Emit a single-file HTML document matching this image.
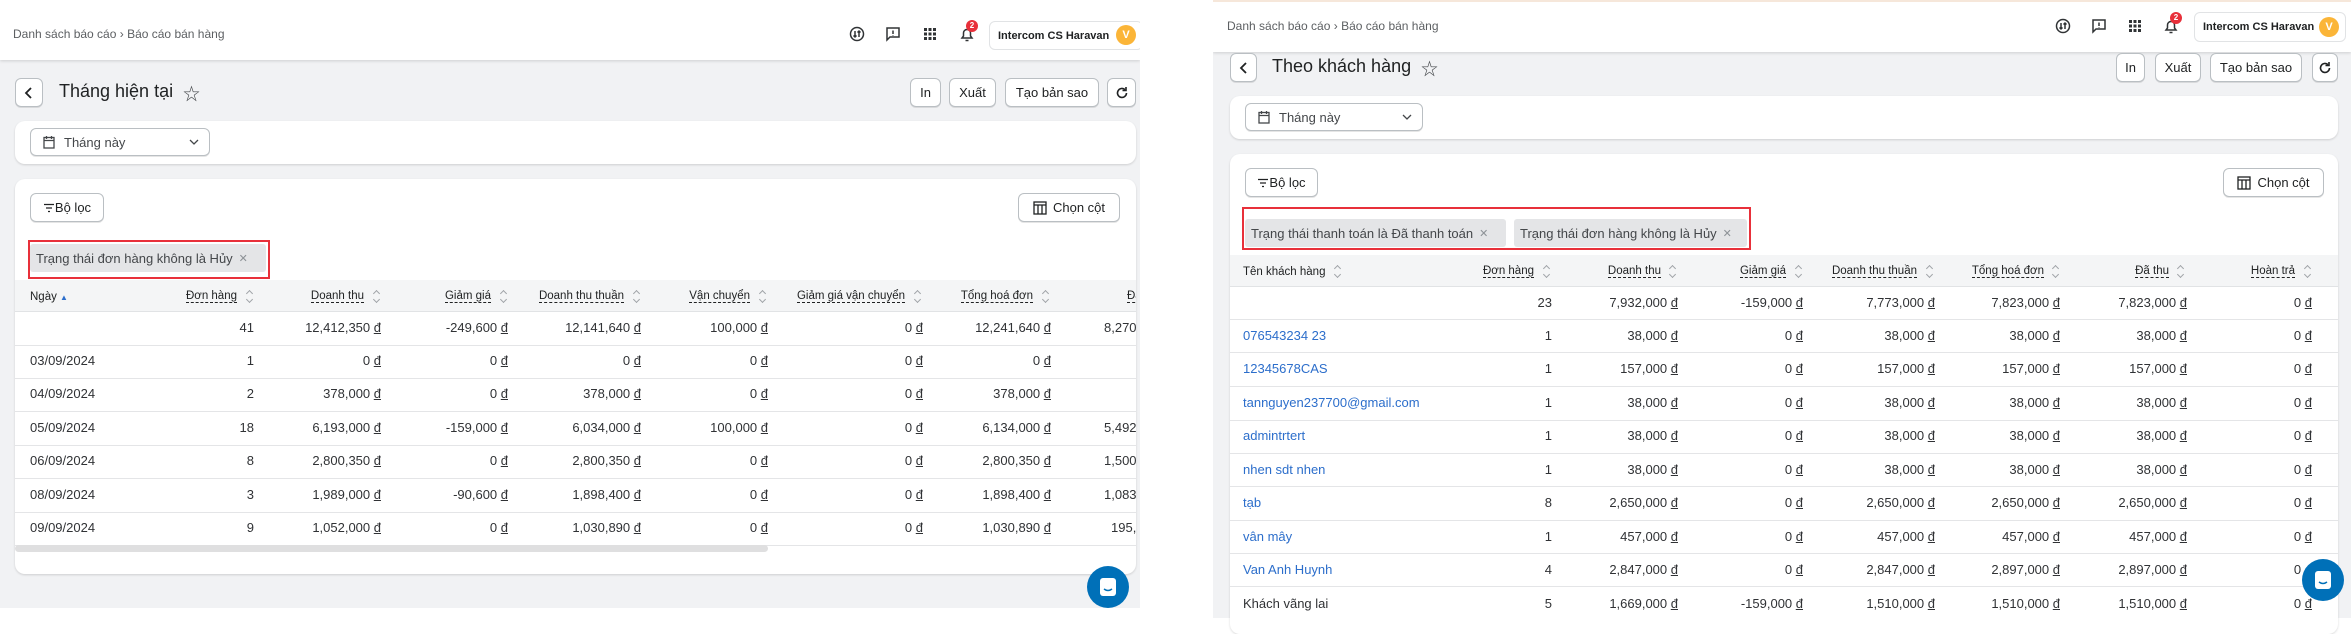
<!DOCTYPE html>
<html><head><meta charset="utf-8"><style>
*{box-sizing:border-box;margin:0;padding:0}
body{width:2351px;height:618px;position:relative;background:#fff;font-family:"Liberation Sans","Noto Sans CJK SC",sans-serif;color:#202223;overflow:hidden}
.a{position:absolute}
.panel{position:absolute;background:#f1f2f4;overflow:hidden}
.top{position:absolute;left:0;top:0;background:#fff;box-shadow:0 1px 3px rgba(0,0,0,.15)}
.bc{position:absolute;font-size:12px;color:#5c5f62;white-space:nowrap}
.btn{position:absolute;background:#fff;border:1px solid #babfc3;border-radius:6px;box-shadow:0 1px 0 rgba(0,0,0,.1);font-size:13px;display:flex;align-items:center;justify-content:center;color:#202223;white-space:nowrap}
.card{position:absolute;background:#fff;border-radius:10px;box-shadow:0 1px 2px rgba(0,0,0,.15);overflow:hidden}
.title{position:absolute;font-size:18px;font-weight:500;white-space:nowrap}
.c{position:absolute;width:170px;text-align:right;font-size:13px;white-space:nowrap;line-height:18px;color:#303235}
.l{position:absolute;font-size:13px;white-space:nowrap;line-height:18px;color:#303235}
u{text-decoration:underline}
.blue{color:#2c6ecb}
.h{position:absolute;width:200px;text-align:right;font-size:11.5px;white-space:nowrap;line-height:16px}
.h span{border-bottom:1px dashed #202223}
.s{position:absolute;width:7px;height:14px}
.s::before,.s::after{content:'';position:absolute;left:1px;width:4px;height:4px;border-left:1px solid #a0a4a8;border-top:1px solid #a0a4a8}
.s::before{top:2px;transform:rotate(45deg)}
.s::after{top:8px;transform:rotate(225deg)}
.sep{position:absolute;left:0;right:0;height:1px;background:#e4e5e7}
.hb{position:absolute;left:0;right:0;height:32px;background:#f4f5f6;border-bottom:1px solid #e1e3e5}
.tag{position:absolute;background:#e4e5e7;border-radius:3px;font-size:13px;color:#44474a;display:flex;align-items:center;padding-left:6px;white-space:nowrap}
.tag i{font-style:normal;color:#8c9196;margin-left:6px;font-size:11px}
.red{position:absolute;border:2px solid #e8303a}
.user{position:absolute;background:#fff;border:1px solid #e1e3e5;border-radius:6px;font-size:11px;font-weight:600;display:flex;align-items:center;padding-left:8px;white-space:nowrap}
.av{position:absolute;width:20px;height:20px;border-radius:50%;background:#fbb538;color:#fff;font-size:11px;font-weight:bold;text-align:center;line-height:20px}
.chat{position:absolute;width:42px;height:42px;border-radius:50%;background:#0070b8}
</style></head><body>

<!-- LEFT PANEL -->
<div class="panel" style="left:0;top:0;width:1140px;height:608px">
  <div class="top" style="width:1140px;height:60px"></div>
  <div class="bc" style="left:13px;top:27px">Danh sách báo cáo › Báo cáo bán hàng</div>
  <svg class="a" style="left:849px;top:26px" width="16" height="16" viewBox="0 0 16 16" fill="none" stroke="#303335" stroke-width="1.5"><circle cx="8" cy="8" r="6.5"/><path d="M6 5v6M4.5 9.5L6 11l1.5-1.5M10 11V5M8.5 6.5L10 5l1.5 1.5"/></svg>
  <svg class="a" style="left:885px;top:26px" width="16" height="16" viewBox="0 0 16 16" fill="none" stroke="#303335" stroke-width="1.5"><path d="M2 2h12v9H5l-3 3z"/><path d="M8 4.5v3.5M8 9.5v.5"/></svg>
  <svg class="a" style="left:923px;top:27px" width="14" height="14" viewBox="0 0 14 14" fill="#303335"><rect x="1" y="1" width="3" height="3"/><rect x="5.5" y="1" width="3" height="3"/><rect x="10" y="1" width="3" height="3"/><rect x="1" y="5.5" width="3" height="3"/><rect x="5.5" y="5.5" width="3" height="3"/><rect x="10" y="5.5" width="3" height="3"/><rect x="1" y="10" width="3" height="3"/><rect x="5.5" y="10" width="3" height="3"/><rect x="10" y="10" width="3" height="3"/></svg>
  <svg class="a" style="left:959px;top:26px" width="16" height="17" viewBox="0 0 16 17" fill="none" stroke="#303335" stroke-width="1.5"><path d="M3 12h10l-1.5-2V7a3.5 3.5 0 0 0-7 0v3z"/><path d="M6.5 14.5h3"/></svg>
  <div class="a" style="left:966px;top:20px;width:12px;height:12px;border-radius:50%;background:#e8303a;color:#fff;font-size:8px;font-weight:bold;text-align:center;line-height:12px">2</div>
  <div class="user" style="left:989px;top:21px;width:154px;height:29px">Intercom CS Haravan</div>
  <div class="av" style="left:1116px;top:25px">V</div>

  <div class="btn" style="left:15px;top:78px;width:28px;height:29px"><svg width="10" height="14" viewBox="0 0 10 14" fill="none" stroke="#202223" stroke-width="1.8"><path d="M7 2L2 7l5 5"/></svg></div>
  <div class="title" style="left:59px;top:81px">Tháng hiện tại</div>
  <div class="a" style="left:183px;top:80px;font-size:17px;color:#44474a">☆</div>
  <div class="btn" style="left:910px;top:78px;width:31px;height:29px">In</div>
  <div class="btn" style="left:949px;top:78px;width:47px;height:29px">Xuất</div>
  <div class="btn" style="left:1005px;top:78px;width:94px;height:29px">Tạo bản sao</div>
  <div class="btn" style="left:1107px;top:78px;width:29px;height:29px"><svg width="14" height="14" viewBox="0 0 14 14" fill="none" stroke="#202223" stroke-width="1.6"><path d="M11.5 7A4.5 4.5 0 1 1 10 3.6"/><path d="M11 1v3.5H7.5"/></svg></div>

  <div class="card" style="left:15px;top:121px;width:1121px;height:43px">
    <div class="btn" style="left:15px;top:7px;width:180px;height:28px;justify-content:flex-start;padding-left:12px;color:#44474a"><svg width="12" height="14" viewBox="0 0 12 14" fill="none" stroke="#44474a" stroke-width="1.3"><rect x="1" y="2.5" width="10" height="10.5"/><path d="M1 5.5h10M3.5 1v3M8.5 1v3"/></svg><span style="margin-left:9px">Tháng này</span><svg style="position:absolute;right:10px" width="10" height="6" viewBox="0 0 10 6" fill="none" stroke="#44474a" stroke-width="1.3"><path d="M1 1l4 4 4-4"/></svg></div>
  </div>

  <div class="card" style="left:15px;top:179px;width:1121px;height:395px">
    <div class="btn" style="left:15px;top:14px;width:74px;height:29px"><svg width="12" height="10" viewBox="0 0 12 10" stroke="#202223" stroke-width="1.3"><path d="M1 1.5h10M3 5h6M5 8.5h2"/></svg>Bộ lọc</div>
    <div class="btn" style="left:1003px;top:14px;width:102px;height:29px"><svg width="14" height="14" viewBox="0 0 14 14" fill="none" stroke="#202223" stroke-width="1.3"><rect x="1" y="1" width="12" height="12"/><path d="M1 4h12M5 4v9M9 4v9"/></svg><span style="margin-left:6px">Chọn cột</span></div>
    <div class="red" style="left:13px;top:61px;width:242px;height:39px"></div>
    <div class="tag" style="left:15px;top:65px;width:236px;height:28px">Trạng thái đơn hàng không là Hủy<i>✕</i></div>
    <div class="hb" style="top:101px"></div>
    <div class="l" style="left:15px;top:109px;font-size:11.5px;color:#202223">Ngày <span style="color:#2c6ecb;font-size:8px">▲</span></div>
    <div class="h" style="left:22px;top:109px"><span>Đơn hàng</span></div><div class="s" style="left:231px;top:110px"></div>
    <div class="h" style="left:149px;top:109px"><span>Doanh thu</span></div><div class="s" style="left:358px;top:110px"></div>
    <div class="h" style="left:276px;top:109px"><span>Giảm giá</span></div><div class="s" style="left:485px;top:110px"></div>
    <div class="h" style="left:409px;top:109px"><span>Doanh thu thuần</span></div><div class="s" style="left:618px;top:110px"></div>
    <div class="h" style="left:535px;top:109px"><span>Vận chuyển</span></div><div class="s" style="left:744px;top:110px"></div>
    <div class="h" style="left:690px;top:109px"><span>Giảm giá vận chuyển</span></div><div class="s" style="left:899px;top:110px"></div>
    <div class="h" style="left:818px;top:109px"><span>Tổng hoá đơn</span></div><div class="s" style="left:1027px;top:110px"></div>
    <div class="h" style="left:1112px;top:109px;width:120px;text-align:left"><span>Đã thu</span></div>

    <div class="sep" style="top:166px"></div><div class="sep" style="top:199px"></div><div class="sep" style="top:232px"></div><div class="sep" style="top:266px"></div><div class="sep" style="top:299px"></div><div class="sep" style="top:333px"></div><div class="sep" style="top:366px"></div>
    <div class="a" style="left:0;top:366px;width:753px;height:7px;background:#dfdfe0;border-radius:4px"></div>

    <div class="c" style="left:69px;top:140px">41</div><div class="c" style="left:196px;top:140px">12,412,350 <u>đ</u></div><div class="c" style="left:323px;top:140px">-249,600 <u>đ</u></div><div class="c" style="left:456px;top:140px">12,141,640 <u>đ</u></div><div class="c" style="left:583px;top:140px">100,000 <u>đ</u></div><div class="c" style="left:738px;top:140px">0 <u>đ</u></div><div class="c" style="left:866px;top:140px">12,241,640 <u>đ</u></div><div class="l" style="left:1089px;top:140px">8,270,000 <u>đ</u></div>

    <div class="l" style="left:15px;top:173px">03/09/2024</div><div class="c" style="left:69px;top:173px">1</div><div class="c" style="left:196px;top:173px">0 <u>đ</u></div><div class="c" style="left:323px;top:173px">0 <u>đ</u></div><div class="c" style="left:456px;top:173px">0 <u>đ</u></div><div class="c" style="left:583px;top:173px">0 <u>đ</u></div><div class="c" style="left:738px;top:173px">0 <u>đ</u></div><div class="c" style="left:866px;top:173px">0 <u>đ</u></div>

    <div class="l" style="left:15px;top:206px">04/09/2024</div><div class="c" style="left:69px;top:206px">2</div><div class="c" style="left:196px;top:206px">378,000 <u>đ</u></div><div class="c" style="left:323px;top:206px">0 <u>đ</u></div><div class="c" style="left:456px;top:206px">378,000 <u>đ</u></div><div class="c" style="left:583px;top:206px">0 <u>đ</u></div><div class="c" style="left:738px;top:206px">0 <u>đ</u></div><div class="c" style="left:866px;top:206px">378,000 <u>đ</u></div>

    <div class="l" style="left:15px;top:240px">05/09/2024</div><div class="c" style="left:69px;top:240px">18</div><div class="c" style="left:196px;top:240px">6,193,000 <u>đ</u></div><div class="c" style="left:323px;top:240px">-159,000 <u>đ</u></div><div class="c" style="left:456px;top:240px">6,034,000 <u>đ</u></div><div class="c" style="left:583px;top:240px">100,000 <u>đ</u></div><div class="c" style="left:738px;top:240px">0 <u>đ</u></div><div class="c" style="left:866px;top:240px">6,134,000 <u>đ</u></div><div class="l" style="left:1089px;top:240px">5,492,000 <u>đ</u></div>

    <div class="l" style="left:15px;top:273px">06/09/2024</div><div class="c" style="left:69px;top:273px">8</div><div class="c" style="left:196px;top:273px">2,800,350 <u>đ</u></div><div class="c" style="left:323px;top:273px">0 <u>đ</u></div><div class="c" style="left:456px;top:273px">2,800,350 <u>đ</u></div><div class="c" style="left:583px;top:273px">0 <u>đ</u></div><div class="c" style="left:738px;top:273px">0 <u>đ</u></div><div class="c" style="left:866px;top:273px">2,800,350 <u>đ</u></div><div class="l" style="left:1089px;top:273px">1,500,000 <u>đ</u></div>

    <div class="l" style="left:15px;top:307px">08/09/2024</div><div class="c" style="left:69px;top:307px">3</div><div class="c" style="left:196px;top:307px">1,989,000 <u>đ</u></div><div class="c" style="left:323px;top:307px">-90,600 <u>đ</u></div><div class="c" style="left:456px;top:307px">1,898,400 <u>đ</u></div><div class="c" style="left:583px;top:307px">0 <u>đ</u></div><div class="c" style="left:738px;top:307px">0 <u>đ</u></div><div class="c" style="left:866px;top:307px">1,898,400 <u>đ</u></div><div class="l" style="left:1089px;top:307px">1,083,000 <u>đ</u></div>

    <div class="l" style="left:15px;top:340px">09/09/2024</div><div class="c" style="left:69px;top:340px">9</div><div class="c" style="left:196px;top:340px">1,052,000 <u>đ</u></div><div class="c" style="left:323px;top:340px">0 <u>đ</u></div><div class="c" style="left:456px;top:340px">1,030,890 <u>đ</u></div><div class="c" style="left:583px;top:340px">0 <u>đ</u></div><div class="c" style="left:738px;top:340px">0 <u>đ</u></div><div class="c" style="left:866px;top:340px">1,030,890 <u>đ</u></div><div class="l" style="left:1096px;top:340px">195,000 <u>đ</u></div>
  </div>
  <div class="chat" style="left:1087px;top:566px"><svg class="a" style="left:12px;top:11px" width="18" height="20" viewBox="0 0 18 20"><rect x="1" y="1" width="16" height="18" rx="3" fill="#fff"/><path d="M5 12q4 3 8 0" stroke="#0070b8" stroke-width="1.5" fill="none"/></svg></div>
</div>

<!-- RIGHT PANEL -->
<div class="a" style="left:1213px;top:0;width:1138px;height:2px;background:#f6e7da"></div>
<div class="panel" style="left:1213px;top:2px;width:1138px;height:616px">
  <div class="top" style="width:1138px;height:50px"></div>
</div>
<div class="bc" style="left:1227px;top:19px">Danh sách báo cáo › Báo cáo bán hàng</div>
<svg class="a" style="left:2055px;top:18px" width="16" height="16" viewBox="0 0 16 16" fill="none" stroke="#303335" stroke-width="1.5"><circle cx="8" cy="8" r="6.5"/><path d="M6 5v6M4.5 9.5L6 11l1.5-1.5M10 11V5M8.5 6.5L10 5l1.5 1.5"/></svg>
<svg class="a" style="left:2091px;top:18px" width="16" height="16" viewBox="0 0 16 16" fill="none" stroke="#303335" stroke-width="1.5"><path d="M2 2h12v9H5l-3 3z"/><path d="M8 4.5v3.5M8 9.5v.5"/></svg>
<svg class="a" style="left:2128px;top:19px" width="14" height="14" viewBox="0 0 14 14" fill="#303335"><rect x="1" y="1" width="3" height="3"/><rect x="5.5" y="1" width="3" height="3"/><rect x="10" y="1" width="3" height="3"/><rect x="1" y="5.5" width="3" height="3"/><rect x="5.5" y="5.5" width="3" height="3"/><rect x="10" y="5.5" width="3" height="3"/><rect x="1" y="10" width="3" height="3"/><rect x="5.5" y="10" width="3" height="3"/><rect x="10" y="10" width="3" height="3"/></svg>
<svg class="a" style="left:2163px;top:18px" width="16" height="17" viewBox="0 0 16 17" fill="none" stroke="#303335" stroke-width="1.5"><path d="M3 12h10l-1.5-2V7a3.5 3.5 0 0 0-7 0v3z"/><path d="M6.5 14.5h3"/></svg>
<div class="a" style="left:2170px;top:12px;width:12px;height:12px;border-radius:50%;background:#e8303a;color:#fff;font-size:8px;font-weight:bold;text-align:center;line-height:12px">2</div>
<div class="user" style="left:2194px;top:12px;width:152px;height:30px">Intercom CS Haravan</div>
<div class="av" style="left:2319px;top:17px">V</div>

<div class="btn" style="left:1230px;top:53px;width:27px;height:29px"><svg width="10" height="14" viewBox="0 0 10 14" fill="none" stroke="#202223" stroke-width="1.8"><path d="M7 2L2 7l5 5"/></svg></div>
<div class="title" style="left:1272px;top:56px">Theo khách hàng</div>
<div class="a" style="left:1421px;top:55px;font-size:17px;color:#44474a">☆</div>
<div class="btn" style="left:2116px;top:53px;width:29px;height:29px">In</div>
<div class="btn" style="left:2155px;top:53px;width:46px;height:29px">Xuất</div>
<div class="btn" style="left:2210px;top:53px;width:92px;height:29px">Tạo bản sao</div>
<div class="btn" style="left:2312px;top:53px;width:26px;height:29px"><svg width="14" height="14" viewBox="0 0 14 14" fill="none" stroke="#202223" stroke-width="1.6"><path d="M11.5 7A4.5 4.5 0 1 1 10 3.6"/><path d="M11 1v3.5H7.5"/></svg></div>

<div class="card" style="left:1230px;top:96px;width:1108px;height:43px">
  <div class="btn" style="left:15px;top:7px;width:178px;height:28px;justify-content:flex-start;padding-left:12px;color:#44474a"><svg width="12" height="14" viewBox="0 0 12 14" fill="none" stroke="#44474a" stroke-width="1.3"><rect x="1" y="2.5" width="10" height="10.5"/><path d="M1 5.5h10M3.5 1v3M8.5 1v3"/></svg><span style="margin-left:9px">Tháng này</span><svg style="position:absolute;right:10px" width="10" height="6" viewBox="0 0 10 6" fill="none" stroke="#44474a" stroke-width="1.3"><path d="M1 1l4 4 4-4"/></svg></div>
</div>

<div class="card" style="left:1230px;top:154px;width:1108px;height:480px">
  <div class="btn" style="left:15px;top:14px;width:73px;height:29px"><svg width="12" height="10" viewBox="0 0 12 10" stroke="#202223" stroke-width="1.3"><path d="M1 1.5h10M3 5h6M5 8.5h2"/></svg>Bộ lọc</div>
  <div class="btn" style="left:993px;top:14px;width:101px;height:29px"><svg width="14" height="14" viewBox="0 0 14 14" fill="none" stroke="#202223" stroke-width="1.3"><rect x="1" y="1" width="12" height="12"/><path d="M1 4h12M5 4v9M9 4v9"/></svg><span style="margin-left:6px">Chọn cột</span></div>
  <div class="red" style="left:12px;top:53px;width:509px;height:43px"></div>
  <div class="tag" style="left:15px;top:65px;width:261px;height:28px">Trạng thái thanh toán là Đã thanh toán<i>✕</i></div>
  <div class="tag" style="left:284px;top:65px;width:233px;height:28px">Trạng thái đơn hàng không là Hủy<i>✕</i></div>
  <div class="hb" style="top:101px"></div>
  <div class="l" style="left:13px;top:109px;font-size:11.5px;color:#202223">Tên khách hàng</div><div class="s" style="left:104px;top:110px"></div>
  <div class="h" style="left:104px;top:109px"><span>Đơn hàng</span></div><div class="s" style="left:313px;top:110px"></div>
  <div class="h" style="left:231px;top:109px"><span>Doanh thu</span></div><div class="s" style="left:439px;top:110px"></div>
  <div class="h" style="left:356px;top:109px"><span>Giảm giá</span></div><div class="s" style="left:565px;top:110px"></div>
  <div class="h" style="left:487px;top:109px"><span>Doanh thu thuần</span></div><div class="s" style="left:696px;top:110px"></div>
  <div class="h" style="left:614px;top:109px"><span>Tổng hoá đơn</span></div><div class="s" style="left:822px;top:110px"></div>
  <div class="h" style="left:739px;top:109px"><span>Đã thu</span></div><div class="s" style="left:947px;top:110px"></div>
  <div class="h" style="left:865px;top:109px"><span>Hoàn trả</span></div><div class="s" style="left:1074px;top:110px"></div>

  <div class="sep" style="top:165px"></div><div class="sep" style="top:198px"></div><div class="sep" style="top:232px"></div><div class="sep" style="top:266px"></div><div class="sep" style="top:299px"></div><div class="sep" style="top:332px"></div><div class="sep" style="top:366px"></div><div class="sep" style="top:399px"></div><div class="sep" style="top:432px"></div>

  <div class="c" style="left:152px;top:140px">23</div><div class="c" style="left:278px;top:140px">7,932,000 <u>đ</u></div><div class="c" style="left:403px;top:140px">-159,000 <u>đ</u></div><div class="c" style="left:535px;top:140px">7,773,000 <u>đ</u></div><div class="c" style="left:660px;top:140px">7,823,000 <u>đ</u></div><div class="c" style="left:787px;top:140px">7,823,000 <u>đ</u></div><div class="c" style="left:912px;top:140px">0 <u>đ</u></div>

  <div class="l blue" style="left:13px;top:173px">076543234 23</div><div class="c" style="left:152px;top:173px">1</div><div class="c" style="left:278px;top:173px">38,000 <u>đ</u></div><div class="c" style="left:403px;top:173px">0 <u>đ</u></div><div class="c" style="left:535px;top:173px">38,000 <u>đ</u></div><div class="c" style="left:660px;top:173px">38,000 <u>đ</u></div><div class="c" style="left:787px;top:173px">38,000 <u>đ</u></div><div class="c" style="left:912px;top:173px">0 <u>đ</u></div>

  <div class="l blue" style="left:13px;top:206px">12345678CAS</div><div class="c" style="left:152px;top:206px">1</div><div class="c" style="left:278px;top:206px">157,000 <u>đ</u></div><div class="c" style="left:403px;top:206px">0 <u>đ</u></div><div class="c" style="left:535px;top:206px">157,000 <u>đ</u></div><div class="c" style="left:660px;top:206px">157,000 <u>đ</u></div><div class="c" style="left:787px;top:206px">157,000 <u>đ</u></div><div class="c" style="left:912px;top:206px">0 <u>đ</u></div>

  <div class="l blue" style="left:13px;top:240px">tannguyen237700@gmail.com</div><div class="c" style="left:152px;top:240px">1</div><div class="c" style="left:278px;top:240px">38,000 <u>đ</u></div><div class="c" style="left:403px;top:240px">0 <u>đ</u></div><div class="c" style="left:535px;top:240px">38,000 <u>đ</u></div><div class="c" style="left:660px;top:240px">38,000 <u>đ</u></div><div class="c" style="left:787px;top:240px">38,000 <u>đ</u></div><div class="c" style="left:912px;top:240px">0 <u>đ</u></div>

  <div class="l blue" style="left:13px;top:273px">admintrtert</div><div class="c" style="left:152px;top:273px">1</div><div class="c" style="left:278px;top:273px">38,000 <u>đ</u></div><div class="c" style="left:403px;top:273px">0 <u>đ</u></div><div class="c" style="left:535px;top:273px">38,000 <u>đ</u></div><div class="c" style="left:660px;top:273px">38,000 <u>đ</u></div><div class="c" style="left:787px;top:273px">38,000 <u>đ</u></div><div class="c" style="left:912px;top:273px">0 <u>đ</u></div>

  <div class="l blue" style="left:13px;top:307px">nhen sdt nhen</div><div class="c" style="left:152px;top:307px">1</div><div class="c" style="left:278px;top:307px">38,000 <u>đ</u></div><div class="c" style="left:403px;top:307px">0 <u>đ</u></div><div class="c" style="left:535px;top:307px">38,000 <u>đ</u></div><div class="c" style="left:660px;top:307px">38,000 <u>đ</u></div><div class="c" style="left:787px;top:307px">38,000 <u>đ</u></div><div class="c" style="left:912px;top:307px">0 <u>đ</u></div>

  <div class="l blue" style="left:13px;top:340px">tạb</div><div class="c" style="left:152px;top:340px">8</div><div class="c" style="left:278px;top:340px">2,650,000 <u>đ</u></div><div class="c" style="left:403px;top:340px">0 <u>đ</u></div><div class="c" style="left:535px;top:340px">2,650,000 <u>đ</u></div><div class="c" style="left:660px;top:340px">2,650,000 <u>đ</u></div><div class="c" style="left:787px;top:340px">2,650,000 <u>đ</u></div><div class="c" style="left:912px;top:340px">0 <u>đ</u></div>

  <div class="l blue" style="left:13px;top:374px">vân mây</div><div class="c" style="left:152px;top:374px">1</div><div class="c" style="left:278px;top:374px">457,000 <u>đ</u></div><div class="c" style="left:403px;top:374px">0 <u>đ</u></div><div class="c" style="left:535px;top:374px">457,000 <u>đ</u></div><div class="c" style="left:660px;top:374px">457,000 <u>đ</u></div><div class="c" style="left:787px;top:374px">457,000 <u>đ</u></div><div class="c" style="left:912px;top:374px">0 <u>đ</u></div>

  <div class="l blue" style="left:13px;top:407px">Van Anh Huynh</div><div class="c" style="left:152px;top:407px">4</div><div class="c" style="left:278px;top:407px">2,847,000 <u>đ</u></div><div class="c" style="left:403px;top:407px">0 <u>đ</u></div><div class="c" style="left:535px;top:407px">2,847,000 <u>đ</u></div><div class="c" style="left:660px;top:407px">2,897,000 <u>đ</u></div><div class="c" style="left:787px;top:407px">2,897,000 <u>đ</u></div><div class="c" style="left:912px;top:407px">0 <u>đ</u></div>

  <div class="l" style="left:13px;top:441px">Khách vãng lai</div><div class="c" style="left:152px;top:441px">5</div><div class="c" style="left:278px;top:441px">1,669,000 <u>đ</u></div><div class="c" style="left:403px;top:441px">-159,000 <u>đ</u></div><div class="c" style="left:535px;top:441px">1,510,000 <u>đ</u></div><div class="c" style="left:660px;top:441px">1,510,000 <u>đ</u></div><div class="c" style="left:787px;top:441px">1,510,000 <u>đ</u></div><div class="c" style="left:912px;top:441px">0 <u>đ</u></div>
</div>
<div class="chat" style="left:2302px;top:559px"><svg class="a" style="left:12px;top:11px" width="18" height="20" viewBox="0 0 18 20"><rect x="1" y="1" width="16" height="18" rx="3" fill="#fff"/><path d="M5 12q4 3 8 0" stroke="#0070b8" stroke-width="1.5" fill="none"/></svg></div>

</body></html>
